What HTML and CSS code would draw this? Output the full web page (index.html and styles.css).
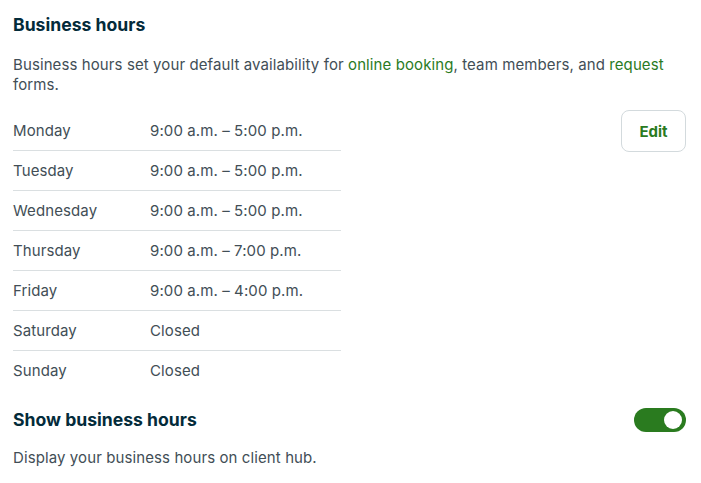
FILE: index.html
```html
<!DOCTYPE html>
<html lang="en">
<head>
<meta charset="utf-8">
<title>Business hours</title>
<link rel="stylesheet" href="styles.css">
</head>
<body>
<main class="panel">
  <h2 class="title">Business hours</h2>
  <p class="intro">Business hours set your default availability for <a class="link" href="#">online booking</a>, team members, and <a class="link" href="#">request</a> forms.</p>
  <div class="hours-row">
    <div class="hours">
      <div class="day"><span class="day-name">Monday</span><span class="day-time">9:00 a.m. – 5:00 p.m.</span></div>
      <div class="day"><span class="day-name">Tuesday</span><span class="day-time">9:00 a.m. – 5:00 p.m.</span></div>
      <div class="day"><span class="day-name">Wednesday</span><span class="day-time">9:00 a.m. – 5:00 p.m.</span></div>
      <div class="day"><span class="day-name">Thursday</span><span class="day-time">9:00 a.m. – 7:00 p.m.</span></div>
      <div class="day"><span class="day-name">Friday</span><span class="day-time">9:00 a.m. – 4:00 p.m.</span></div>
      <div class="day"><span class="day-name">Saturday</span><span class="day-time">Closed</span></div>
      <div class="day"><span class="day-name">Sunday</span><span class="day-time">Closed</span></div>
    </div>
    <button class="edit-btn" type="button">Edit</button>
  </div>
  <div class="setting">
    <h3 class="setting-title">Show business hours</h3>
    <span class="toggle" role="switch" aria-checked="true"><span class="knob"></span></span>
  </div>
  <p class="setting-desc">Display your business hours on client hub.</p>
</main>
</body>
</html>
```
FILE: styles.css
```css
* { box-sizing: border-box; }
html, body { margin: 0; padding: 0; background: #ffffff; }
body {
  font-family: Inter, "Noto Sans", "Liberation Sans", sans-serif;
  color: #424e56;
  font-size: 15px;
  line-height: 20px;
  letter-spacing: 0.1px;
}
.panel { padding: 13px 15px 0 13px; }
.title {
  margin: 0;
  font-size: 17.6px;
  line-height: 24px;
  font-weight: 700;
  letter-spacing: 0;
  color: #032b3a;
}
.intro { margin: 18px 0 0 0; }
.link { color: #2a7b1f; text-decoration: none; }
.hours-row {
  display: flex;
  justify-content: space-between;
  align-items: flex-start;
  margin-top: 16px;
}
.hours { width: 328px; }
.day {
  display: flex;
  height: 40px;
  align-items: center;
  border-bottom: 1px solid #dadfe1;
}
.day:last-child { border-bottom: none; }
.day-name { width: 137px; }
.edit-btn {
  width: 65px;
  height: 42px;
  margin-top: -1px;
  border: 1px solid #d3dadd;
  border-radius: 8px;
  background: #fff;
  color: #2a7b1f;
  font-family: inherit;
  font-size: 15px;
  font-weight: 700;
  padding: 0;
}
.setting {
  display: flex;
  justify-content: space-between;
  align-items: center;
  margin-top: 17px;
}
.setting-title {
  margin: 0;
  font-size: 17.6px;
  line-height: 24px;
  font-weight: 700;
  letter-spacing: 0;
  color: #032b3a;
}
.toggle {
  width: 52px;
  height: 24px;
  border-radius: 12px;
  background: #2a7b1f;
  display: flex;
  align-items: center;
  justify-content: flex-end;
  padding: 0 4px;
}
.knob {
  width: 18px;
  height: 18px;
  border-radius: 50%;
  background: #fff;
}
.setting-desc { margin: 16px 0 0 0; }
```
